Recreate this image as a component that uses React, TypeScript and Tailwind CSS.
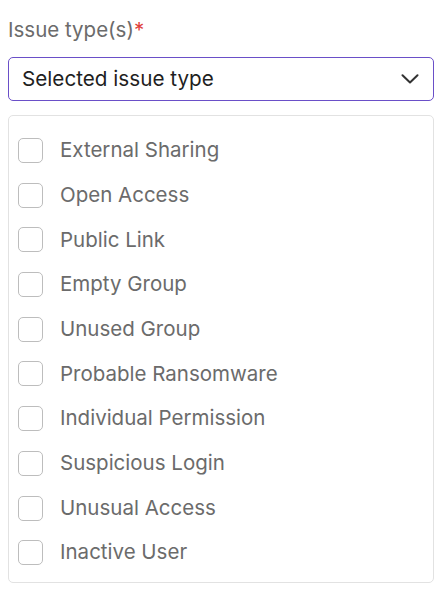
import React from "react";

const items = [
  "External Sharing",
  "Open Access",
  "Public Link",
  "Empty Group",
  "Unused Group",
  "Probable Ransomware",
  "Individual Permission",
  "Suspicious Login",
  "Unusual Access",
  "Inactive User",
];

export default function App() {
  return (
    <div className="w-[442px] h-[596px] bg-white px-2 pt-[17px] font-['Inter',sans-serif]">
      <div className="text-[20.5px] leading-[26px] text-[#6b6b6b]">
        Issue type(s)<span className="text-[#e0403a]">*</span>
      </div>
      <div className="mt-[14px] h-[44px] rounded-[5px] border border-[#6a4fc8] flex items-center justify-between pl-[13px] pr-[14px]">
        <span className="text-[20.7px] text-[#1f1f1f]">Selected issue type</span>
        <svg width="18" height="10" viewBox="0 0 18 10" fill="none">
          <path d="M1.5 1.2 L9 8.5 L16.5 1.2" stroke="#333" strokeWidth="2" strokeLinecap="round" strokeLinejoin="round" />
        </svg>
      </div>
      <div className="mt-[14px] h-[468px] rounded-[5px] border border-[#e2e2e2] pt-[22px] px-[9px]">
        <div className="flex flex-col gap-[19.7px]">
          {items.map((it) => (
            <div key={it} className="flex items-center h-[25px]">
              <div className="w-[25px] h-[25px] rounded-[5px] border border-[#bdbdbd] shrink-0" />
              <span className="ml-[17px] text-[20.5px] text-[#6b6b6b]">{it}</span>
            </div>
          ))}
        </div>
      </div>
    </div>
  );
}
